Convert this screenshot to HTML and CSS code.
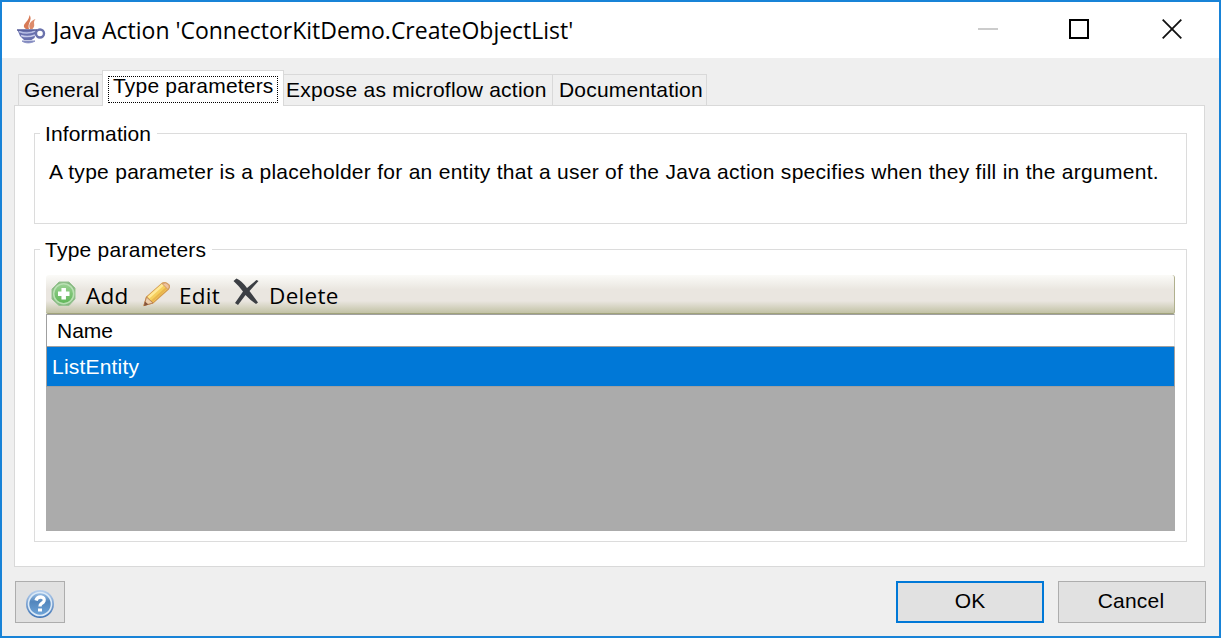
FILE: index.html
```
<!DOCTYPE html>
<html lang="en">
<head>
<meta charset="utf-8">
<title>Java Action</title>
<link rel="stylesheet" href="styles.css">
</head>
<body>
<div class="window">
  <header class="titlebar">
    <svg class="app-icon" width="30" height="30" viewBox="0 0 30 30">
      <path d="M10 14C4 9.500 13 7.500 13.500 0C17 5 11 8 13 14Z" fill="#d77a56"/>
      <path d="M14 14C12 9 14.500 6 19.500 4C16 8 20.500 10 16.500 14Z" fill="#dd8b6b"/>
      <path d="M1.500 15H20.500L18.500 23L15.500 25H8L4 21Z" fill="#6870ae"/>
      <path d="M3 16.500C8 18.500 15 18.500 20 15.500" fill="none" stroke="#b9bfe4" stroke-width="1.500"/>
      <path d="M5 20.500C9 22 14 22 19 20" fill="none" stroke="#c7cbea" stroke-width="1.500"/>
      <ellipse cx="24" cy="18.500" rx="4" ry="4" fill="none" stroke="#6a72ac" stroke-width="2.400"/>
      <path d="M6 26C9 28.500 15 28.500 19 26Z" fill="#7880b8" stroke="#8d94c6"/>
      <path d="M1 15H21" stroke="#565c99" stroke-width="1.500"/>
    </svg>
    <h1 class="title">Java Action 'ConnectorKitDemo.CreateObjectList'</h1>
    <div class="controls">
      <svg class="control" width="20" height="20" viewBox="0 0 20 20"><path d="M0 10H20" stroke="#cccccc" stroke-width="2"/></svg>
      <svg class="control maximize" width="20" height="20" viewBox="0 0 20 20"><path d="M1 1H19V19H1Z" fill="none" stroke="#000" stroke-width="2"/></svg>
      <svg class="control close" width="20" height="20" viewBox="0 0 20 20"><path d="M.7 .7L19.300 19.300M19.300 .7L.7 19.300" stroke="#111" stroke-width="1.800"/></svg>
    </div>
  </header>
  <main class="content">
    <nav class="tabs">
      <div class="tab tab-general"><span>General</span></div>
      <div class="tab tab-active"><span class="focus">Type parameters</span></div>
      <div class="tab tab-expose"><span>Expose as microflow action</span></div>
      <div class="tab tab-docs"><span>Documentation</span></div>
    </nav>
    <section class="page">
      <div class="group info">
        <div class="legend">Information</div>
        <p class="description">A type parameter is a placeholder for an entity that a user of the Java action specifies when they fill in the argument.</p>
      </div>
      <div class="group params">
        <div class="legend legend-params">Type parameters</div>
        <div class="toolbar">
          <svg class="icon-add" width="26" height="26" viewBox="0 0 26 26">
            <defs><linearGradient id="green" x2="0" y2="1"><stop stop-color="#9bd294"/><stop offset="1" stop-color="#5fb657"/></linearGradient></defs>
            <path d="M8 1H18L24 7V18L18 24.500H8L1 18V8Z" fill="#86b880" stroke="#98c392"/>
            <circle cx="12.700" cy="12.700" r="10" fill="url(#green)" stroke="#b9e0b3" stroke-width="1.500"/>
            <path d="M12.700 7V18.500M7 12.700H18.500" stroke="#fff" stroke-width="4.500"/>
          </svg>
          <span class="label-add">Add</span>
          <svg class="icon-edit" width="28" height="26" viewBox="0 0 28 26">
            <path d="M1 24.500L3.500 16L19.500 2Q23 .5 26 4Q27 6 25.500 8L10 22Z" fill="#f5cf5d" stroke="#d49a4c" stroke-width="1.200"/>
            <path d="M5.500 16.500L20 3.500" stroke="#ffe996" stroke-width="2.500"/>
            <path d="M8.500 20.500L23.500 7" stroke="#e8b44c" stroke-width="2"/>
            <path d="M19 2.500Q23 .5 26 4Q27 6 25 8.500Z" fill="#edc3a0" stroke="#d29b68"/>
            <path d="M3.500 16L10 22L1 24.500Z" fill="#edcfac" stroke="#ba8257"/>
            <path d="M1 25L2 20.500L5.500 23.500Z" fill="#85543c"/>
          </svg>
          <span class="label-edit">Edit</span>
          <svg class="icon-delete" width="26" height="28" viewBox="0 0 26 28">
            <path d="M.5 3L3.500 .5Q9 3 14 10L23.500 2L25.500 3L16.500 13L25 24.500L23 26Q17 22 12.500 17L5 27L2 25L10 13.500Q5 7 .5 3Z" fill="#3c3f44"/>
          </svg>
          <span class="label-delete">Delete</span>
        </div>
        <div class="grid">
          <div class="grid-header"><span class="name">Name</span></div>
          <div class="grid-row"><span class="entity">ListEntity</span></div>
        </div>
      </div>
    </section>
    <footer class="footer">
      <button class="button help" aria-label="Help">
        <svg width="30" height="30" viewBox="0 0 30 30">
          <defs><linearGradient id="blue" x2="0" y2="1"><stop stop-color="#9fc3e8"/><stop offset=".4" stop-color="#5286bd"/><stop offset="1" stop-color="#6fa5d9"/></linearGradient>
          <linearGradient id="rim" x2="0" y2="1"><stop stop-color="#b9d1ee"/><stop offset="1" stop-color="#3f74b5"/></linearGradient></defs>
          <circle cx="15" cy="15" r="14" fill="url(#rim)"/>
          <circle cx="15" cy="15" r="11.500" fill="url(#blue)" stroke="#dceaf7" stroke-width="1.600"/>
          <path d="M11 11.500Q12 7.800 16 8Q20 8.500 19 12Q18.500 13.500 16.500 14.500Q15 15.500 15 17.500" fill="none" stroke="#fff" stroke-width="3.300"/>
          <rect x="13" y="19.500" width="4" height="3" fill="#fff"/>
        </svg>
      </button>
      <div class="actions">
        <button class="button ok"><span>OK</span></button>
        <button class="button cancel"><span>Cancel</span></button>
      </div>
    </footer>
  </main>
</div>
</body>
</html>
```
FILE: styles.css
```
* { box-sizing: border-box; }
body {
  margin: 0;
  font: 21px/24px "Liberation Sans", Arial, sans-serif;
  color: #000;
  letter-spacing: 0.2px;
  white-space: nowrap;
}
svg { display: block; flex: none; }
.window {
  width: 1221px;
  height: 638px;
  border: 2px solid #1883d7;
  background: #efefef;
  overflow: hidden;
}
.titlebar {
  display: flex;
  height: 56px;
  background: #fff;
}
.app-icon { margin: 13px 0 0 14px; }
.title {
  margin: 12px 0 0 7px;
  font: 400 23px/32px "Open Sans", "Noto Sans", sans-serif;
  letter-spacing: -0.02px;
}
.controls {
  display: flex;
  margin: 17px 37px 0 auto;
}
.maximize { margin-left: 71px; }
.close { margin-left: 73px; }
.content { padding: 12px 13px 0 12px; }
.tabs {
  display: flex;
  align-items: flex-end;
  height: 35px;
  padding-left: 4px;
}
.tab {
  height: 31px;
  padding-top: 3px;
  border: 1px solid #d9d9d9;
  border-bottom: 0;
}
.tab-general { width: 85px; padding-left: 5px; border-right: 0; letter-spacing: 0.1px; }
.tab-active {
  position: relative;
  z-index: 1;
  width: 182px;
  height: 36px;
  margin: 0 0 -1px -1px;
  padding: 5px 0 0 5px;
  background: #fff;
}
.focus {
  display: block;
  width: 170px;
  height: 27px;
  padding-left: 4px;
  border: 1px dotted #000;
  line-height: 18px;
}
.tab-expose { width: 270px; margin-left: -1px; padding-left: 2px; letter-spacing: 0.24px; }
.tab-docs { width: 155px; margin-left: -1px; padding-left: 6px; }
.page {
  width: 1191px;
  height: 462px;
  padding: 27px 17px 0 19px;
  border: 1px solid #d9d9d9;
  background: #fff;
}
.group { border: 1px solid #dcdcdc; }
.info { height: 91px; }
.params { height: 293px; margin-top: 25px; padding-right: 11px; padding-left: 11px; }
.legend {
  width: 117px;
  height: 24px;
  margin: -12px 0 0 5px;
  padding-left: 5px;
  background: #fff;
  letter-spacing: 0.1px;
}
.legend-params { width: 172px; margin-left: -6px; letter-spacing: 0.25px; }
.description { margin: 14px 0 0 14px; letter-spacing: 0.28px; }
.toolbar {
  display: flex;
  height: 39px;
  margin-top: 13px;
  padding-left: 5px;
  border-right: 1px solid #b0b08e;
  border-bottom: 1px solid #a1a37b;
  border-radius: 3px 3px 2px 2px;
  background: linear-gradient(#fbfbf8 0, #eae6e0 38%, #eae6e0 68%, #c2c2a5 100%);
  font: 22.5px/30px "Open Sans", "Noto Sans", sans-serif;
  letter-spacing: 0.3px;
}
.toolbar span { margin-top: 6px; }
.icon-add { margin-top: 6px; }
.label-add { width: 57px; padding-left: 9px; }
.icon-edit { margin-top: 6px; margin-left: 9px; }
.label-edit { width: 54px; padding-left: 8px; }
.icon-delete { margin-top: 3px; margin-left: 8px; }
.label-delete { padding-left: 10px; }
.grid { height: 217px; background: #ababab; }
.grid-header {
  height: 33px;
  padding: 4px 0 0 10px;
  border: 1px solid #a0a0a0;
  border-right-color: #e5e5e5;
  background: #fff;
  letter-spacing: 0;
}
.grid-row {
  height: 40px;
  padding: 8px 0 0 5px;
  border: 1px solid #a0a0a0;
  border-top: 0;
  background: #0078d7;
  color: #fff;
}
.footer {
  display: flex;
  justify-content: space-between;
  margin-top: 14px;
  padding-left: 1px;
}
.actions { display: flex; gap: 14px; }
.button {
  height: 42px;
  padding: 0 0 2px;
  border: 1px solid #adadad;
  background: #e1e1e1;
  color: #000;
  font: inherit;
  letter-spacing: 0.2px;
}
.help { display: flex; width: 50px; padding: 7px 0 0 9px; }
.ok { width: 148px; border: 2px solid #0078d7; }
.cancel { width: 148px; padding-right: 2px; }
```
